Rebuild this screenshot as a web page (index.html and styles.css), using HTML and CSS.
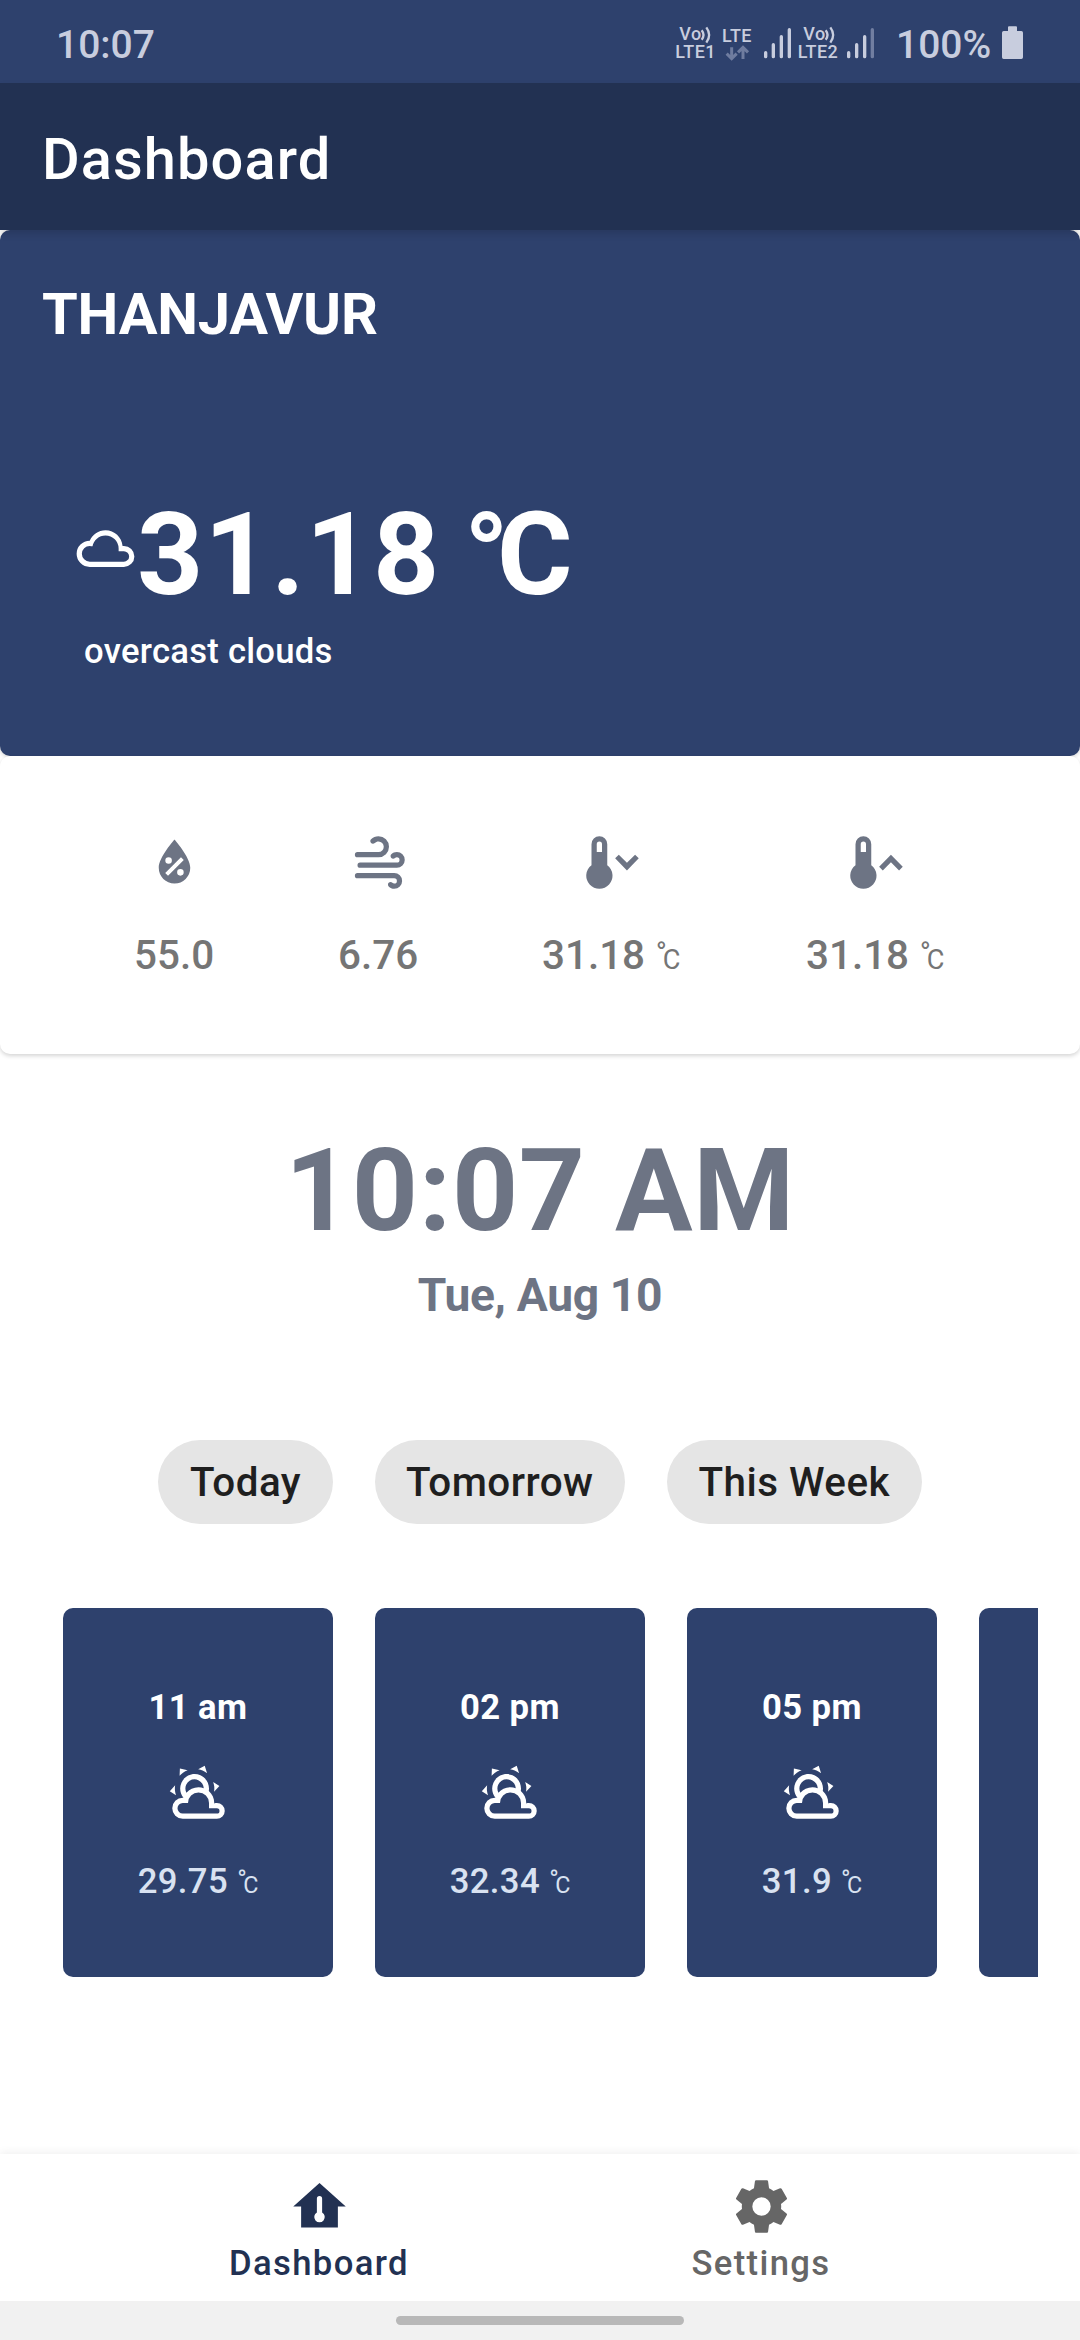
FILE: index.html
```html
<!DOCTYPE html>
<html lang="en">
<head>
<meta charset="utf-8">
<title>Dashboard</title>
<link rel="stylesheet" href="styles.css">
</head>
<body>
<svg class="defs" aria-hidden="true">
  <symbol id="partly" viewBox="0 0 24 24"><path d="M12.74,5.47C15.1,6.5 16.35,9.03 15.92,11.46C17.19,12.56 18,14.19 18,16V16.17C18.31,16.06 18.65,16 19,16A3,3 0 0,1 22,19A3,3 0 0,1 19,22H6A4,4 0 0,1 2,18A4,4 0 0,1 6,14H6.27C5,12.45 4.6,10.24 5.5,8.26C6.72,5.5 9.97,4.24 12.74,5.47M11.93,7.3C10.16,6.5 8.09,7.31 7.31,9.07C6.85,10.09 6.93,11.22 7.41,12.13C8.5,10.83 10.16,10 12,10C12.7,10 13.38,10.12 14,10.34C13.94,9.06 13.18,7.86 11.93,7.3M13.55,3.64C13,3.4 12.45,3.23 11.88,3.12L14.37,1.82L15.27,4.71C14.76,4.29 14.19,3.93 13.55,3.64M6.09,4.44C5.6,4.79 5.17,5.19 4.8,5.63L4.91,2.82L7.87,3.5C7.25,3.71 6.65,4.03 6.09,4.44M18,9.71C17.91,9.12 17.78,8.55 17.59,8L19.97,9.5L17.92,11.73C18.03,11.08 18.05,10.4 18,9.71M3.04,11.3C3.11,11.9 3.24,12.47 3.43,13L1.06,11.5L3.1,9.28C3,9.93 2.97,10.61 3.04,11.3M19,18H16V16A4,4 0 0,0 12,12A4,4 0 0,0 8,16H6A2,2 0 0,0 4,18A2,2 0 0,0 6,20H19A1,1 0 0,0 20,19A1,1 0 0,0 19,18Z"/></symbol>
</svg>
<div class="status">
  <span class="status-time">10:07</span>
  <svg class="status-icons" viewBox="0 -30 1200 249">
    <text class="net" x="58" y="91">Vo</text>
    <path class="wave" d="M125 61Q136 75 125 89M139 52Q156 75 139 98"/>
    <text class="net" x="46" y="144">LTE1</text>
    <text class="net" x="186" y="95">LTE</text>
    <path class="arrows" d="M215 112V145M200 131L215 146L230 131M249 147V113M234 127L249 112L264 127"/>
    <path class="bars" d="M317 128V140M340 104V140M364 80V140M388 59V140M566 128V140M590 104V140M614 80V140"/>
    <path class="bars dim" d="M637 59V140"/>
    <text class="net" x="430" y="91">Vo</text>
    <path class="wave" d="M497 61Q508 75 497 89M511 52Q528 75 511 98"/>
    <text class="net" x="413" y="144">LTE2</text>
    <text class="pct" x="708" y="143">100%</text>
    <path class="fill" d="M1031 63H1044V52Q1044 49 1047 49H1068Q1071 49 1071 52V63H1084Q1089 63 1089 68V142Q1089 147 1084 147H1031Q1026 147 1026 142V68Q1026 63 1031 63Z"/>
  </svg>
</div>
<header class="bar">Dashboard</header>
<main>
  <section class="hero">
    <h1 class="city">THANJAVUR</h1>
    <div class="now">
      <svg class="icon now-icon" viewBox="0 0 24 24"><path d="M6,19A5,5 0 0,1 1,14A5,5 0 0,1 6,9C7,6.65 9.3,5 12,5C15.43,5 18.24,7.66 18.5,11.03L19,11A4,4 0 0,1 23,15A4,4 0 0,1 19,19H6M19,13H17V12A5,5 0 0,0 12,7C9.5,7 7.45,8.82 7.06,11.19C6.73,11.07 6.37,11 6,11A3,3 0 0,0 3,14A3,3 0 0,0 6,17H19A2,2 0 0,0 21,15A2,2 0 0,0 19,13Z"/></svg>
      <span class="now-temp">31.18</span><span class="big-unit"><span class="big-deg">°</span>C</span>
    </div>
    <div class="desc">overcast clouds</div>
  </section>
  <section class="stats">
    <div class="stat">
      <svg class="icon" viewBox="0 0 24 24"><path fill-rule="evenodd" d="M12,3.25C12,3.25 6,10 6,14C6,17.32 8.69,20 12,20A6,6 0 0,0 18,14C18,10 12,3.25 12,3.25M14.47,9.97L15.53,11.03L9.53,17.03L8.47,15.97L14.47,9.97M9.75,10A1.25,1.25 0 0,1 11,11.25A1.25,1.25 0 0,1 9.75,12.5A1.25,1.25 0 0,1 8.5,11.25A1.25,1.25 0 0,1 9.75,10M14.25,14.5A1.25,1.25 0 0,1 15.5,15.75A1.25,1.25 0 0,1 14.25,17A1.25,1.25 0 0,1 13,15.75A1.25,1.25 0 0,1 14.25,14.5Z"/></svg>
      <span class="val">55.0</span>
    </div>
    <div class="stat">
      <svg class="icon" viewBox="0 0 24 24"><path d="M4,10A1,1 0 0,1 3,9A1,1 0 0,1 4,8H12A2,2 0 0,0 14,6A2,2 0 0,0 12,4C11.45,4 10.95,4.22 10.59,4.59C10.2,5 9.56,5 9.17,4.59C8.78,4.2 8.78,3.56 9.17,3.17C9.9,2.45 10.9,2 12,2A4,4 0 0,1 16,6A4,4 0 0,1 12,10H4M19,12A1,1 0 0,0 20,11A1,1 0 0,0 19,10C18.72,10 18.47,10.11 18.29,10.29C17.9,10.68 17.27,10.68 16.88,10.29C16.5,9.9 16.5,9.27 16.88,8.88C17.42,8.34 18.17,8 19,8A3,3 0 0,1 22,11A3,3 0 0,1 19,14H5A1,1 0 0,1 4,13A1,1 0 0,1 5,12H19M18,18H4A1,1 0 0,1 3,17A1,1 0 0,1 4,16H18A3,3 0 0,1 21,19A3,3 0 0,1 18,22C17.17,22 16.42,21.66 15.88,21.12C15.5,20.73 15.5,20.1 15.88,19.71C16.27,19.32 16.9,19.32 17.29,19.71C17.47,19.89 17.72,20 18,20A1,1 0 0,0 19,19A1,1 0 0,0 18,18Z"/></svg>
      <span class="val">6.76</span>
    </div>
    <div class="stat">
      <svg class="icon thermo" viewBox="0 0 24 24"><path fill-rule="evenodd" d="M7,2A3,3 0 0,0 4,5V13A5,5 0 1,0 10,13V5A3,3 0 0,0 7,2M7,4A1,1 0 0,1 8,5V8H6V5A1,1 0 0,1 7,4M14.4,9L17.5,12.1L20.6,9L22,10.4L17.5,15L13,10.4Z"/></svg>
      <span class="val">31.18<span class="unit"><span class="deg">°</span>C</span></span>
    </div>
    <div class="stat">
      <svg class="icon thermo" viewBox="0 0 24 24"><path fill-rule="evenodd" d="M7,2A3,3 0 0,0 4,5V13A5,5 0 1,0 10,13V5A3,3 0 0,0 7,2M7,4A1,1 0 0,1 8,5V8H6V5A1,1 0 0,1 7,4M14.4,15L17.5,11.9L20.6,15L22,13.6L17.5,9L13,13.6Z"/></svg>
      <span class="val">31.18<span class="unit"><span class="deg">°</span>C</span></span>
    </div>
  </section>
  <section class="clock">
    <div class="time">10:07 AM</div>
    <div class="date">Tue, Aug 10</div>
  </section>
  <div class="chips"><span class="chip">Today</span><span class="chip">Tomorrow</span><span class="chip">This Week</span></div>
  <div class="forecast">
    <article class="card"><div class="hour">11 am</div><svg class="icon"><use href="#partly"/></svg><div class="card-temp">29.75<span class="unit"><span class="deg">°</span>C</span></div></article>
    <article class="card"><div class="hour">02 pm</div><svg class="icon"><use href="#partly"/></svg><div class="card-temp">32.34<span class="unit"><span class="deg">°</span>C</span></div></article>
    <article class="card narrow"><div class="hour">05 pm</div><svg class="icon"><use href="#partly"/></svg><div class="card-temp">31.9<span class="unit"><span class="deg">°</span>C</span></div></article>
    <article class="card"></article>
  </div>
</main>
<nav class="nav">
  <div class="tab active">
    <svg class="icon" viewBox="0 0 24 24"><path fill-rule="evenodd" d="M12,3L2,12H5V20H19V12H22L12,3M12,8A1,1 0 0,1 13,9V14.27A2,2 0 1,1 11,14.27V9A1,1 0 0,1 12,8Z"/></svg>
    <span>Dashboard</span>
  </div>
  <div class="tab">
    <svg class="icon" viewBox="0 0 24 24"><path d="M12,15.5A3.5,3.5 0 0,1 8.5,12A3.5,3.5 0 0,1 12,8.5A3.5,3.5 0 0,1 15.5,12A3.5,3.5 0 0,1 12,15.5M19.43,12.97C19.47,12.65 19.5,12.33 19.5,12C19.5,11.67 19.47,11.34 19.43,11L21.54,9.37C21.73,9.22 21.78,8.95 21.66,8.73L19.66,5.27C19.54,5.05 19.27,4.96 19.05,5.05L16.56,6.05C16.04,5.66 15.5,5.32 14.87,5.07L14.5,2.42C14.46,2.18 14.25,2 14,2H10C9.75,2 9.54,2.18 9.5,2.42L9.13,5.07C8.5,5.32 7.96,5.66 7.44,6.05L4.95,5.05C4.73,4.96 4.46,5.05 4.34,5.27L2.34,8.73C2.21,8.95 2.27,9.22 2.46,9.37L4.57,11C4.53,11.34 4.5,11.67 4.5,12C4.5,12.33 4.53,12.65 4.57,12.97L2.46,14.63C2.27,14.78 2.21,15.05 2.34,15.27L4.34,18.73C4.46,18.95 4.73,19.03 4.95,18.95L7.44,17.94C7.96,18.34 8.5,18.68 9.13,18.93L9.5,21.58C9.54,21.82 9.75,22 10,22H14C14.25,22 14.46,21.82 14.5,21.58L14.87,18.93C15.5,18.67 16.04,18.34 16.56,17.94L19.05,18.95C19.27,19.03 19.54,18.95 19.66,18.73L21.66,15.27C21.78,15.05 21.73,14.78 21.54,14.63L19.43,12.97Z"/></svg>
    <span>Settings</span>
  </div>
</nav>
<div class="gesture"><div class="pill"></div></div>
</body>
</html>
```
FILE: styles.css
```css
* { box-sizing: border-box; }
body {
  margin: 0;
  width: 1080px;
  height: 2340px;
  display: flex;
  flex-direction: column;
  overflow: hidden;
  background: #fff;
  font-family: Roboto, "Liberation Sans", sans-serif;
  font-weight: 500;
}
.defs { display: none; }
.icon { display: block; width: 63px; height: 63px; fill: currentColor; flex: none; }

.status {
  flex: none;
  height: 83px;
  display: flex;
  justify-content: space-between;
  padding: 0 20px 0 56px;
  background: #2e416d;
  color: #c8cdde;
}
.status-time { font-size: 39px; line-height: 91px; }
.status-icons { width: 400px; height: 83px; fill: #c8cdde; }
.net { font-size: 54px; letter-spacing: 1.2px; }
.pct { font-size: 117px; }
.wave { fill: none; stroke: #c8cdde; stroke-width: 7; }
.arrows { fill: none; stroke: #6f7c9f; stroke-width: 9; }
.bars { fill: none; stroke: #c8cdde; stroke-width: 10; stroke-linecap: round; }
.bars.dim { stroke: #717ea1; }

.bar {
  flex: none;
  height: 147px;
  padding: 5px 42px 0;
  line-height: 142px;
  font-size: 57.75px;
  letter-spacing: 1.1px;
  color: #fff;
  background: #223152;
  box-shadow: 0 4px 7px rgba(0, 0, 0, .13);
  position: relative;
}

main { flex: 1; min-height: 0; }
.hero {
  height: 526px;
  padding: 50px 42px 0;
  border-radius: 10px;
  background: #2e416d;
  color: #fff;
  box-shadow: 0 1px 4px rgba(0, 0, 0, .2);
}
.city { margin: 0; font-size: 57.75px; line-height: 68px; letter-spacing: -.2px; font-weight: 700; }
.now { display: flex; align-items: center; margin: 139px 0 0 32px; height: 136px; font-size: 115.5px; line-height: 136px; font-weight: 700; }
.now-icon { margin-bottom: 13px; }
.now-temp { letter-spacing: .9px; }
.big-unit { margin-left: 24px; }
.big-deg { margin-right: -12px; }
.desc { margin: 8px 0 0 42px; font-size: 34.65px; line-height: 40px; letter-spacing: .26px; }

.stats {
  height: 298px;
  padding: 75px 0 0 134px;
  display: grid;
  grid-template-columns: 204px 204px 264px auto;
  justify-items: start;
  align-items: start;
  border-radius: 10px;
  background: #fff;
  color: #6d7484;
  box-shadow: 0 2px 4px rgba(0, 0, 0, .17);
}
.stat { display: flex; flex-direction: column; align-items: center; gap: 38px; }
.thermo { margin-left: 3px; }
.val { font-size: 40.4px; line-height: 48px; color: #757575; }
.unit { font-size: .673em; font-weight: 400; letter-spacing: 0; margin-left: .39em; }
.deg { font-size: 1.1em; line-height: 0; vertical-align: .21em; margin-right: -.14em; }

.clock { padding-top: 69px; text-align: center; color: #6d7484; font-weight: 700; }
.time { font-size: 115.5px; line-height: 136px; letter-spacing: .63px; }
.date { margin-top: 9px; font-size: 46.2px; line-height: 54px; letter-spacing: -.35px; }

.chips { display: flex; justify-content: center; gap: 42px; margin-top: 118px; }
.chip { height: 84px; padding: 0 31.5px; border-radius: 42px; background: #e5e5e5; color: #1f1f1f; font-size: 40.4px; line-height: 86px; letter-spacing: .45px; }

.forecast { display: flex; gap: 42px; margin: 84px 42px 0; padding-left: 21px; overflow: hidden; }
.card { flex: none; width: 270px; height: 369px; padding-top: 79px; display: flex; flex-direction: column; align-items: center; border-radius: 10px; background: #2e416d; color: #fff; font-size: 34.65px; line-height: 40px; letter-spacing: .4px; }
.narrow { width: 250px; }
.hour { font-weight: 700; margin-bottom: 34px; }
.card-temp { margin-top: 37px; color: #d9e2f1; }

.nav {
  flex: none;
  height: 147px;
  padding: 21px 98px 0;
  display: grid;
  grid-template-columns: 1fr 1fr;
  background: #fff;
  box-shadow: 0 -2px 8px rgba(0, 0, 0, .06);
}
.tab { display: flex; flex-direction: column; align-items: center; gap: 5px; color: #666; font-size: 34.65px; line-height: 40px; letter-spacing: 1.35px; }
.tab.active { color: #223152; }
.gesture { flex: none; height: 39px; padding-top: 15px; background: #f1f1f1; position: relative; }
.pill { width: 288px; height: 9px; margin: 0 auto; border-radius: 5px; background: #b8b8b8; }
```
